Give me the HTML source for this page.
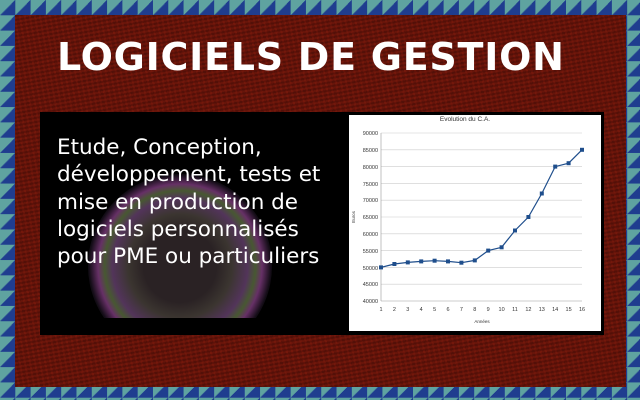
<!DOCTYPE html>
<html><head><meta charset="utf-8"><style>
html,body{margin:0;padding:0}
body{width:640px;height:400px;position:relative;overflow:hidden;font-family:"DejaVu Sans","Liberation Sans",sans-serif;
background-color:#2a3f8c;
background-image:linear-gradient(135deg,#5fa3a0 0 50%,#1f3d8f 50% 100%);
background-size:15.3px 15.3px;}
.red{position:absolute;left:15px;top:15px;width:611px;height:372px;
background:#6a140a;
background-image:repeating-linear-gradient(170deg,rgba(0,0,0,.12) 0 2px,rgba(160,40,20,.12) 2px 4px),repeating-linear-gradient(80deg,rgba(0,0,0,.1) 0 3px,rgba(140,30,10,.1) 3px 5px);}
h1{position:absolute;left:57px;top:34px;margin:0;color:#fff;font-size:38px;font-weight:bold;letter-spacing:0.75px;line-height:46px;white-space:nowrap}
.panel{position:absolute;left:40px;top:112px;width:564px;height:223px;background:#000;overflow:hidden}
.glow{position:absolute;left:48px;top:62px;width:184px;height:184px;border-radius:50%;
background:radial-gradient(circle,#2a2224 0 28%,#3b3530 40%,rgba(110,70,120,.75) 52%,rgba(130,160,90,.55) 58%,rgba(170,80,170,.6) 63%,rgba(60,40,70,.3) 70%,rgba(0,0,0,0) 78%)}
.cut{position:absolute;left:0;top:206px;width:300px;height:30px;background:#000}
.txt{position:absolute;left:17px;top:22px;color:#fff;font-size:21.5px;line-height:27.3px;white-space:nowrap}
.chart{position:absolute;left:349px;top:115px;width:252px;height:216px;background:#fff}
</style></head><body>
<div class="red"></div>
<h1>LOGICIELS DE GESTION</h1>
<div class="panel">
<div class="glow"></div><div class="cut"></div>
<div class="txt">Etude, Conception,<br>développement, tests et<br>mise en production de<br>logiciels personnalisés<br>pour PME ou particuliers</div>
</div>
<div class="chart">
<svg width="252" height="216" viewBox="349 115 252 216" font-family="Liberation Sans,sans-serif" font-size="5.5" fill="#333">
<text x="465" y="121" text-anchor="middle" font-size="6.5">Evolution du C.A.</text>
<g stroke="#ccc" stroke-width="0.6">
<line x1="381" x2="582" y1="133" y2="133"/><line x1="381" x2="582" y1="149.8" y2="149.8"/><line x1="381" x2="582" y1="166.6" y2="166.6"/><line x1="381" x2="582" y1="183.4" y2="183.4"/><line x1="381" x2="582" y1="200.2" y2="200.2"/><line x1="381" x2="582" y1="217" y2="217"/><line x1="381" x2="582" y1="233.8" y2="233.8"/><line x1="381" x2="582" y1="250.6" y2="250.6"/><line x1="381" x2="582" y1="267.4" y2="267.4"/><line x1="381" x2="582" y1="284.2" y2="284.2"/>
<line x1="381" x2="582" y1="301" y2="301" stroke="#999"/><line x1="381" x2="381" y1="133" y2="301" stroke="#999"/>
</g>
<g text-anchor="end">
<text x="378" y="135">90000</text><text x="378" y="152">85000</text><text x="378" y="169">80000</text><text x="378" y="186">75000</text><text x="378" y="202">70000</text><text x="378" y="219">65000</text><text x="378" y="236">60000</text><text x="378" y="253">55000</text><text x="378" y="270">50000</text><text x="378" y="286">45000</text><text x="378" y="303">40000</text>
</g>
<g text-anchor="middle">
<text x="381" y="311">1</text><text x="394.4" y="311">2</text><text x="407.8" y="311">3</text><text x="421.2" y="311">4</text><text x="434.6" y="311">5</text><text x="448" y="311">6</text><text x="461.4" y="311">7</text><text x="474.8" y="311">8</text><text x="488.2" y="311">9</text><text x="501.6" y="311">10</text><text x="515" y="311">11</text><text x="528.4" y="311">12</text><text x="541.8" y="311">13</text><text x="555.2" y="311">14</text><text x="568.6" y="311">15</text><text x="582" y="311">16</text>
<text x="482" y="323" font-size="4.5">Années</text>
</g>
<text x="355" y="217" font-size="4.5" transform="rotate(-90 355 217)" text-anchor="middle">Euros</text>
<polyline fill="none" stroke="#1f4e8c" stroke-width="1.2" points="381,267.4 394.4,264 407.8,262.4 421.2,261.4 434.6,260.7 448,261.4 461.4,262.7 474.8,260.4 488.2,250.6 501.6,247.3 515,230.5 528.4,217 541.8,193.5 555.2,166.6 568.6,163.2 582,149.8"/>
<g fill="#1f4e8c">
<rect x="379" y="265.4" width="4" height="4"/><rect x="392.4" y="262" width="4" height="4"/><rect x="405.8" y="260.4" width="4" height="4"/><rect x="419.2" y="259.4" width="4" height="4"/><rect x="432.6" y="258.7" width="4" height="4"/><rect x="446" y="259.4" width="4" height="4"/><rect x="459.4" y="260.7" width="4" height="4"/><rect x="472.8" y="258.4" width="4" height="4"/><rect x="486.2" y="248.6" width="4" height="4"/><rect x="499.6" y="245.3" width="4" height="4"/><rect x="513" y="228.5" width="4" height="4"/><rect x="526.4" y="215" width="4" height="4"/><rect x="539.8" y="191.5" width="4" height="4"/><rect x="553.2" y="164.6" width="4" height="4"/><rect x="566.6" y="161.2" width="4" height="4"/><rect x="580" y="147.8" width="4" height="4"/>
</g>
</svg>
</div>
</body></html>
